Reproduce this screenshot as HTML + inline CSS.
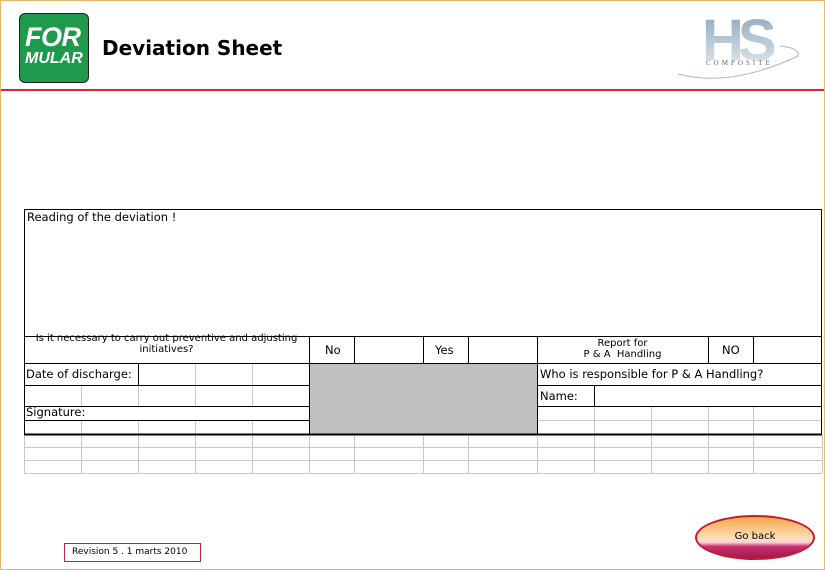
<!DOCTYPE html>
<html><head><meta charset="utf-8"><style>
body{margin:0;width:825px;height:570px;overflow:hidden;background:#fff;font-family:"DejaVu Sans","Liberation Sans",sans-serif;position:relative}
.t{position:absolute;font-size:11.5px;color:#000;white-space:nowrap}
</style></head><body>
<div style="position:absolute;left:0;top:0;width:823px;height:568px;border:1px solid #e6b46a"></div>
<div style="position:absolute;left:1px;top:89px;width:823px;height:2px;background:#d9262a"></div>
<div style="position:absolute;left:19px;top:13px;width:68px;height:68px;border:1.5px solid #222;border-radius:6px;background:#1e9a4c"></div>
<div style="position:absolute;left:25px;top:24px;font:italic bold 27px 'Liberation Sans',sans-serif;color:#fff;line-height:27px;letter-spacing:-0.5px">FOR</div>
<div style="position:absolute;left:25px;top:50px;font:italic bold 16px 'Liberation Sans',sans-serif;color:#fff;line-height:18px">MULAR</div>
<div style="position:absolute;left:102px;top:36px;font:bold 20px 'DejaVu Sans',sans-serif;color:#000">Deviation Sheet</div>
<svg style="position:absolute;left:670px;top:8px" width="140" height="74">
<defs><linearGradient id="g" x1="0" y1="0" x2="0" y2="1"><stop offset="0" stop-color="#8aa4ba"/><stop offset="1" stop-color="#e6edf2"/></linearGradient></defs>
<text x="32" y="52" font-family="Liberation Sans" font-weight="bold" font-size="58" fill="url(#g)" letter-spacing="-6">HS</text>
<path d="M8 66 Q60 80 128 48 Q130 40 110 38" stroke="#a9b8c6" fill="none" stroke-width="1"/>
<text x="36" y="57" font-family="Liberation Serif" font-size="7" fill="#667" letter-spacing="3">COMPOSITE</text>
</svg>
<svg style="position:absolute;left:0;top:0" width="825" height="570">
<g stroke="#c8c8c8" stroke-width="1">
<line x1="24" y1="447.5" x2="822" y2="447.5"/><line x1="24" y1="460.5" x2="822" y2="460.5"/><line x1="24" y1="473.5" x2="822" y2="473.5"/>
</g>
<g stroke="#c8c8c8">
<line x1="24.5" y1="435" x2="24.5" y2="473"/><line x1="81.5" y1="435" x2="81.5" y2="473"/><line x1="138.5" y1="435" x2="138.5" y2="473"/><line x1="195.5" y1="435" x2="195.5" y2="473"/><line x1="252.5" y1="435" x2="252.5" y2="473"/><line x1="309.5" y1="435" x2="309.5" y2="473"/><line x1="354.5" y1="435" x2="354.5" y2="473"/><line x1="423.5" y1="435" x2="423.5" y2="473"/><line x1="468.5" y1="435" x2="468.5" y2="473"/><line x1="537.5" y1="435" x2="537.5" y2="473"/><line x1="594.5" y1="435" x2="594.5" y2="473"/><line x1="651.5" y1="435" x2="651.5" y2="473"/><line x1="708.5" y1="435" x2="708.5" y2="473"/><line x1="753.5" y1="435" x2="753.5" y2="473"/><line x1="822.5" y1="435" x2="822.5" y2="473"/>
<line x1="81.5" y1="385" x2="81.5" y2="406"/><line x1="81.5" y1="420" x2="81.5" y2="434"/>
<line x1="138.5" y1="420" x2="138.5" y2="434"/><line x1="195.5" y1="420" x2="195.5" y2="434"/><line x1="252.5" y1="420" x2="252.5" y2="434"/>
<line x1="138.5" y1="385" x2="138.5" y2="406"/><line x1="195.5" y1="363" x2="195.5" y2="406"/><line x1="252.5" y1="363" x2="252.5" y2="406"/>
<line x1="594.5" y1="406" x2="594.5" y2="434"/><line x1="651.5" y1="406" x2="651.5" y2="434"/><line x1="708.5" y1="406" x2="708.5" y2="434"/><line x1="753.5" y1="406" x2="753.5" y2="434"/>
<line x1="537" y1="420.5" x2="822" y2="420.5"/>
</g>
<rect x="309" y="363" width="228" height="72" fill="#c0c0c0"/>
<g stroke="#000" stroke-width="1" fill="none">
<rect x="24.5" y="209.5" width="797" height="225"/>
<line x1="24" y1="336.5" x2="822" y2="336.5"/>
<line x1="24" y1="363.5" x2="822" y2="363.5"/>
<line x1="24" y1="385.5" x2="309" y2="385.5"/><line x1="537" y1="385.5" x2="822" y2="385.5"/>
<line x1="24" y1="406.5" x2="309" y2="406.5"/><line x1="537" y1="406.5" x2="822" y2="406.5"/>
<line x1="24" y1="420.5" x2="309" y2="420.5"/>
<line x1="138.5" y1="363" x2="138.5" y2="385"/>
<line x1="309.5" y1="336" x2="309.5" y2="435"/><line x1="354.5" y1="336" x2="354.5" y2="363"/><line x1="423.5" y1="336" x2="423.5" y2="363"/><line x1="468.5" y1="336" x2="468.5" y2="363"/><line x1="537.5" y1="336" x2="537.5" y2="435"/><line x1="708.5" y1="336" x2="708.5" y2="363"/><line x1="753.5" y1="336" x2="753.5" y2="363"/>
<line x1="594.5" y1="385" x2="594.5" y2="406"/>
</g>
<line x1="24" y1="434.5" x2="822" y2="434.5" stroke="#000" stroke-width="2"/>
</svg>
<div class="t" style="left:27px;top:210px">Reading of the deviation !</div>
<div class="t" style="left:24px;top:333px;width:285px;text-align:center;font-size:10px;line-height:11px;height:28px;overflow:hidden">Is it necessary to carry out preventive and adjusting<br>initiatives?</div>
<div class="t" style="left:325px;top:343px">No</div>
<div class="t" style="left:435px;top:343px">Yes</div>
<div class="t" style="left:537px;top:338px;width:171px;text-align:center;font-size:10px;line-height:11px">Report for<br>P &amp; A&nbsp; Handling</div>
<div class="t" style="left:722px;top:343px">NO</div>
<div class="t" style="left:26px;top:367px">Date of discharge:</div>
<div class="t" style="left:26px;top:405px">Signature:</div>
<div class="t" style="left:540px;top:367px">Who is responsible for P &amp; A Handling?</div>
<div class="t" style="left:540px;top:389px">Name:</div>
<div style="position:absolute;left:64px;top:543px;width:135px;height:17px;border:1px solid #c0283a;font:9px 'DejaVu Sans',sans-serif;line-height:17px;text-indent:7px">Revision 5 . 1 marts 2010</div>
<div style="position:absolute;left:695px;top:515px;width:116px;height:41px;border:2px solid #c8182e;border-radius:50%;background:linear-gradient(#f5a84a 0%,#fde0c0 55%,#f8d0d8 62%,#c8306a 72%,#a01850 100%);font:10px 'DejaVu Sans',sans-serif;text-align:center;line-height:40px">Go back</div>
</body></html>
